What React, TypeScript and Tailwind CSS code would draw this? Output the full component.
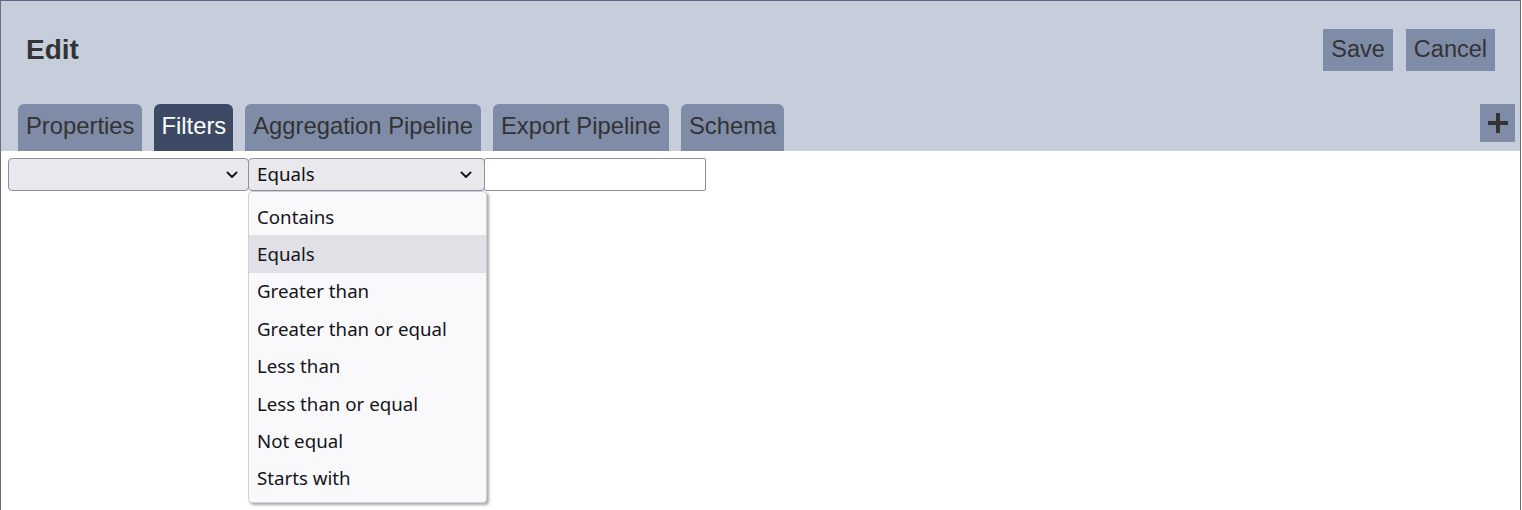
import React from "react";

const Chevron = () => (
  <svg width="12" height="8" viewBox="0 0 12 8" className="block">
    <path d="M1.5 1.5 L6 6 L10.5 1.5" fill="none" stroke="#1b1b1f" strokeWidth="2" strokeLinecap="round" strokeLinejoin="round" />
  </svg>
);

const tabs = ["Properties", "Filters", "Aggregation Pipeline", "Export Pipeline", "Schema"];
const options = [
  "Contains",
  "Equals",
  "Greater than",
  "Greater than or equal",
  "Less than",
  "Less than or equal",
  "Not equal",
  "Starts with",
];

export default function App() {
  return (
    <div className="w-[1521px] h-[510px] border-t border-t-[#5b6984] border-l border-r border-l-[#6f6f6f] border-r-[#6f6f6f] bg-white overflow-hidden" style={{ fontFamily: '"Liberation Sans", Arial, sans-serif' }}>
      <div className="bg-[#c6cedb] h-[150px] flex flex-col">
        <div className="flex items-center pl-[25px] pr-[25px] pt-[28px]">
          <div className="text-[28px] font-bold text-[#333333] leading-none">Edit</div>
          <div className="ml-auto flex gap-[13px]">
            <div className="h-[42px] px-[8px] bg-[#7f8ca8] text-[#333333] text-[23.5px] flex items-center">Save</div>
            <div className="h-[42px] px-[8px] bg-[#7f8ca8] text-[#333333] text-[23.5px] flex items-center">Cancel</div>
          </div>
        </div>
        <div className="mt-auto flex items-start pl-[17px] pr-[5px]">
          <div className="flex gap-[12px] items-end">
            {tabs.map((t) => (
              <div
                key={t}
                className={
                  t === "Filters"
                    ? "h-[47px] px-[7px] pb-[4px] rounded-t-[6px] bg-[#3d4a66] text-white text-[23.8px] flex items-center"
                    : "h-[47px] px-[8px] pb-[4px] rounded-t-[6px] bg-[#7f8ca8] text-[#333333] text-[23.8px] flex items-center"
                }
              >
                {t}
              </div>
            ))}
          </div>
          <div className="ml-auto w-[35px] h-[38px] bg-[#7f8ca8] flex items-center justify-center">
            <svg width="22" height="22" viewBox="0 0 22 22">
              <path d="M11 1 V21 M1 11 H21" stroke="#333333" strokeWidth="4" />
            </svg>
          </div>
        </div>
      </div>
      <div className="pt-[7px] pl-[7px] flex items-start" style={{ fontFamily: '"Noto Sans", sans-serif' }}>
        <div className="w-[241px] h-[33px] bg-[#e9e9ed] border border-[#8f8f9d] rounded-[4px] flex items-center justify-end pr-[10px]">
          <Chevron />
        </div>
        <div className="relative -ml-px">
          <div className="w-[237px] h-[33px] bg-[#e9e9ed] border border-[#8f8f9d] rounded-[4px] flex items-center pl-[8px] pr-[12px] text-[18.7px] text-[#111111]">
            <span>Equals</span>
            <span className="ml-auto"><Chevron /></span>
          </div>
          <div className="absolute left-0 top-[33px] w-[239px] bg-[#f9f9fb] border border-[#cfcfd8] rounded-[4px] shadow-[2px_2px_3px_rgba(0,0,0,0.35)] pt-[6px] pb-[5px]">
            {options.map((o) => (
              <div
                key={o}
                className={
                  o === "Equals"
                    ? "h-[37.4px] flex items-center pl-[8px] text-[18.7px] text-[#15141a] bg-[#e0e0e6]"
                    : "h-[37.4px] flex items-center pl-[8px] text-[18.7px] text-[#15141a]"
                }
              >
                {o}
              </div>
            ))}
          </div>
        </div>
        <div className="-ml-px w-[222px] h-[33px] bg-white border border-[#8f8f9d] rounded-[2px]" />
      </div>
    </div>
  );
}
